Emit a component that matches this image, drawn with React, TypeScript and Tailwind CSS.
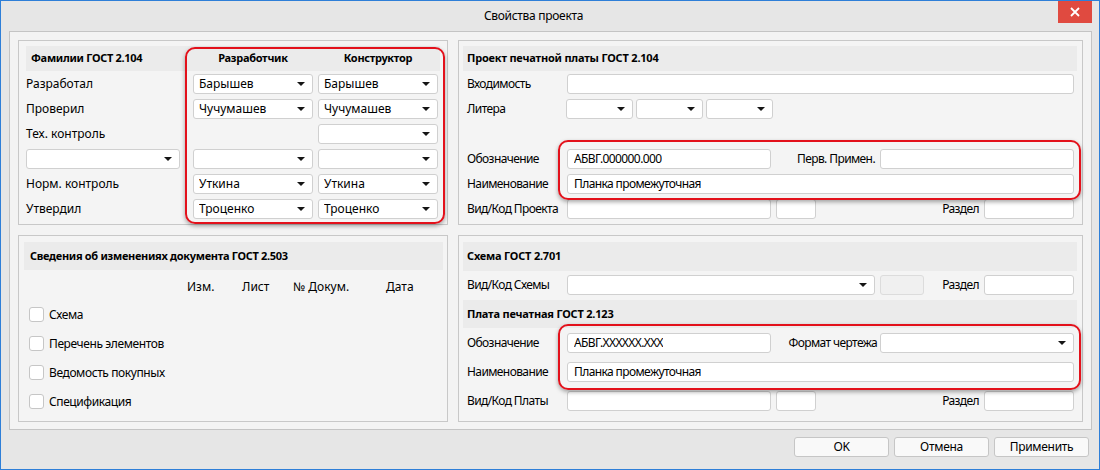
import React from 'react'
import clsx from 'clsx'

// small building blocks of the dialog

function Arrow() {
  return (
    <svg width="8" height="4" viewBox="0 0 8 4" className="shrink-0">
      <path d="M0 0h8L4 4z" fill="#151515" />
    </svg>
  )
}

function Combo({ value = '', className }: { value?: string; className?: string }) {
  return (
    <div
      className={clsx(
        'h-5 bg-white border border-[#d0d0d0] rounded-[3px] flex items-center pl-[5px] pr-[7px]',
        className
      )}
    >
      <span className="flex-1 truncate leading-[18px]">{value}</span>
      <Arrow />
    </div>
  )
}

function Input({ value = '', className }: { value?: string; className?: string }) {
  return (
    <div
      className={clsx(
        'h-5 bg-white border border-[#d0d0d0] rounded-[3px] flex items-center pl-[6px]',
        className
      )}
    >
      <span className="truncate leading-[18px]">{value}</span>
    </div>
  )
}

function Header({ children, className }: { children: React.ReactNode; className?: string }) {
  return (
    <div className={clsx('bg-[#ebebeb] flex items-center font-bold text-[11px]', className)}>
      {children}
    </div>
  )
}

function RedBox({ className }: { className?: string }) {
  return (
    <div
      className={clsx(
        'absolute border-2 border-[#e3111b] rounded-[10px] shadow-[0_2px_4px_rgba(0,0,0,0.35)] pointer-events-none',
        className
      )}
    />
  )
}

function Check({ label }: { label: string }) {
  return (
    <div className="flex items-center h-[15px]">
      <div className="w-[15px] h-[15px] bg-white border border-[#c6c6c6] rounded-[3px]" />
      <span className="ml-[5px] leading-[15px] tracking-[-0.4px]">{label}</span>
    </div>
  )
}

const people = [
  { label: 'Разработал', dev: 'Барышев', con: 'Барышев' },
  { label: 'Проверил', dev: 'Чучумашев', con: 'Чучумашев' },
  { label: 'Тех. контроль', dev: null, con: '' },
  { label: '', dev: '', con: '' },
  { label: 'Норм. контроль', dev: 'Уткина', con: 'Уткина' },
  { label: 'Утвердил', dev: 'Троценко', con: 'Троценко' },
]

export default function App() {
  return (
    <div className="w-[1100px] h-[470px] bg-[#e6e6e6] border border-[#2e7fd8] flex flex-col text-[12px] text-black font-['Noto_Sans',sans-serif] overflow-hidden">
      {/* Title bar */}
      <div className="h-[30px] flex items-start shrink-0">
        <div className="flex-1" />
        <div className="mt-[6px] ml-[8px] leading-[18px] tracking-[-0.3px]">Свойства проекта</div>
        <div className="flex-1" />
        <div className="-mt-px w-[34px] h-[23px] bg-[#e04a40] flex items-center justify-center mr-[7px]">
          <svg width="10" height="10" viewBox="0 0 10 10">
            <path d="M1 1l8 8M9 1l-8 8" stroke="white" strokeWidth="1.8" />
          </svg>
        </div>
      </div>

      {/* Frame */}
      <div className="ml-[8px] w-[1083px] h-[399px] border border-[#c4c4c4] bg-[#f3f3f3] pl-[8px] pt-[8px] grid grid-cols-[430px_625px] grid-rows-[185px_187px] gap-x-[10px] gap-y-[10px]">
        {/* Фамилии */}
        <div className="relative border border-[#c8c8c8] bg-[#f4f4f4] pl-[7px] pt-[5px]">
          <Header className="h-[25px] w-[414px] grid grid-cols-[162px_120px_120px] gap-x-[5px] tracking-[-0.3px]">
            <span className="pl-[5px]">Фамилии ГОСТ 2.104</span>
            <span className="text-center">Разработчик</span>
            <span className="text-center">Конструктор</span>
          </Header>
          <div className="mt-[3px] grid grid-cols-[162px_120px_120px] gap-x-[5px] gap-y-[5px]">
            {people.map((p, i) => (
              <React.Fragment key={i}>
                {i === 3 ? (
                  <Combo className="w-[154px]" />
                ) : (
                  <div className="h-5 leading-5">{p.label}</div>
                )}
                {p.dev === null ? <div /> : <Combo value={p.dev} />}
                <Combo value={p.con} />
              </React.Fragment>
            ))}
          </div>
          <RedBox className="left-[166px] top-[6px] w-[260px] h-[177px]" />
        </div>

        {/* Проект печатной платы */}
        <div className="relative border border-[#c8c8c8] bg-[#f4f4f4] pl-[4px] pr-[5px] pt-[5px] tracking-[-0.6px]">
          <Header className="h-[25px] pl-[4px] tracking-[-0.2px]">Проект печатной платы ГОСТ 2.104</Header>
          <div className="mt-[3px] pl-[4px] pr-[3px] flex flex-col gap-y-[5px]">
            <div className="flex items-center h-5">
              <span className="w-[100px]">Входимость</span>
              <Input className="flex-1" />
            </div>
            <div className="flex items-center h-5">
              <span className="w-[99px]">Литера</span>
              <Combo className="w-[67px]" />
              <Combo className="w-[67px] ml-[3px]" />
              <Combo className="w-[67px] ml-[3px]" />
            </div>
            <div className="h-5" />
            <div className="flex items-center h-5">
              <span className="w-[100px]">Обозначение</span>
              <Input className="w-[204px]" value="АБВГ.000000.000" />
              <span className="flex-1 text-right pr-[5px]">Перв. Примен.</span>
              <Input className="w-[194px]" />
            </div>
            <div className="flex items-center h-5">
              <span className="w-[100px]">Наименование</span>
              <Input className="flex-1" value="Планка промежуточная" />
            </div>
            <div className="flex items-center h-5">
              <span className="w-[100px]">Вид/Код Проекта</span>
              <Input className="w-[204px]" />
              <Input className="w-[40px] ml-[5px]" />
              <span className="flex-1 text-right pr-[5px]">Раздел</span>
              <Input className="w-[90px]" />
            </div>
          </div>
          <RedBox className="left-[99px] top-[99px] w-[523px] h-[60px]" />
        </div>

        {/* Сведения об изменениях */}
        <div className="border border-[#c8c8c8] bg-[#f4f4f4] pl-[5px] pr-[4px] pt-[6px]">
          <Header className="h-[28px] pl-[6px] tracking-[-0.3px]">
            Сведения об изменениях документа ГОСТ 2.503
          </Header>
          <div className="mt-[7px] h-5 flex items-center">
            <span className="w-[163px]" />
            <span className="w-[55px]">Изм.</span>
            <span className="w-[51px]">Лист</span>
            <span className="w-[93px]">№ Докум.</span>
            <span>Дата</span>
          </div>
          <div className="mt-[10px] pl-[5px] flex flex-col gap-y-[14px]">
            <Check label="Схема" />
            <Check label="Перечень элементов" />
            <Check label="Ведомость покупных" />
            <Check label="Спецификация" />
          </div>
        </div>

        {/* Схема / Плата */}
        <div className="relative border border-[#c8c8c8] bg-[#f4f4f4] pl-[4px] pr-[5px] pt-[6px] tracking-[-0.6px]">
          <Header className="h-[29px] pl-[4px] tracking-[-0.2px]">Схема ГОСТ 2.701</Header>
          <div className="mt-[4px] pl-[4px] pr-[3px] flex items-center h-5">
            <span className="w-[100px]">Вид/Код Схемы</span>
            <Combo className="w-[308px]" />
            <div className="w-[44px] h-5 ml-[5px] bg-[#f0f0f0] border border-[#dcdcdc] rounded-[3px]" />
            <span className="flex-1 text-right pr-[5px]">Раздел</span>
            <Input className="w-[90px]" />
          </div>
          <Header className="mt-[5px] h-[28px] pl-[4px] tracking-[-0.2px]">Плата печатная ГОСТ 2.123</Header>
          <div className="mt-[5px] pl-[4px] pr-[3px] flex flex-col gap-y-[9px]">
            <div className="flex items-center h-5">
              <span className="w-[100px]">Обозначение</span>
              <Input className="w-[204px]" value="АБВГ.XXXXXX.XXX" />
              <span className="flex-1 text-right pr-[3px]">Формат чертежа</span>
              <Combo className="w-[194px]" />
            </div>
            <div className="flex items-center h-5">
              <span className="w-[100px]">Наименование</span>
              <Input className="flex-1" value="Планка промежуточная" />
            </div>
            <div className="flex items-center h-5">
              <span className="w-[100px]">Вид/Код Платы</span>
              <Input className="w-[204px]" />
              <Input className="w-[40px] ml-[5px]" />
              <span className="flex-1 text-right pr-[5px]">Раздел</span>
              <Input className="w-[90px]" />
            </div>
          </div>
          <RedBox className="left-[99px] top-[88px] w-[523px] h-[66px]" />
        </div>
      </div>

      {/* Buttons */}
      <div className="mt-[7px] flex justify-end gap-x-[5px] pr-[10px]">
        {['OK', 'Отмена', 'Применить'].map((b) => (
          <div
            key={b}
            className="w-[95px] h-5 bg-[#f9f9f9] border border-[#c6c6c6] rounded-[3px] flex items-center justify-center leading-[18px] tracking-[-0.3px]"
          >
            {b}
          </div>
        ))}
      </div>
    </div>
  )
}
